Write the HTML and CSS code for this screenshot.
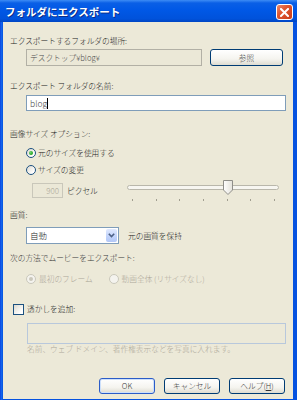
FILE: index.html
```html
<!DOCTYPE html>
<html lang="ja">

<head>
    <meta charset="utf-8" />
    <title>フォルダにエクスポート</title>
    <link rel="stylesheet" href="styles.css">
</head>

<body>
    <div class="window">
        <div class="titlebar">
            <span class="title">フォルダにエクスポート</span>
            <span class="close">
                <svg width="9" height="9" viewBox="0 0 9 9">
                    <path d="M1 1 L8 8 M8 1 L1 8" stroke="#fff" stroke-width="2" stroke-linecap="square" />
                </svg>
            </span>
        </div>
        <div class="frame">
            <div class="panel">
                <div class="label l-loc">エクスポートするフォルダの場所:</div>
                <div class="row loc-row">
                    <div class="field readonly">デスクトップ¥blog¥</div>
                    <div class="btn browse">参照</div>
                </div>

                <div class="label l-name">エクスポート フォルダの名前:</div>
                <div class="field name">blog<span class="caret"></span></div>

                <div class="label l-size">画像サイズ オプション:</div>
                <div class="option opt-orig">
                    <span class="radio checked"></span>
                    <span>元のサイズを使用する</span>
                </div>
                <div class="option opt-resize">
                    <span class="radio"></span>
                    <span>サイズの変更</span>
                </div>
                <div class="row size-row">
                    <div class="field px disabled">900</div>
                    <span class="px-label">ピクセル</span>
                    <div class="slider">
                        <div class="track"></div>
                        <svg class="thumb" width="10" height="15" viewBox="0 0 10 15">
                            <defs>
                                <linearGradient id="tg" x1="0" y1="0" x2="1" y2="0">
                                    <stop offset="0" stop-color="#ffffff" />
                                    <stop offset="1" stop-color="#e4e2da" />
                                </linearGradient>
                            </defs>
                            <path d="M0.5 0.5 H9.5 V10 L5 14.5 L0.5 10 Z" fill="url(#tg)" stroke="#8f8e89" />
                        </svg>
                        <div class="ticks">
                            <i></i><i></i><i></i><i></i><i></i><i></i><i></i>
                        </div>
                    </div>
                </div>

                <div class="label l-quality">画質:</div>
                <div class="row quality-row">
                    <div class="select">
                        <span class="select-text">自動</span>
                        <span class="select-btn">
                            <svg width="7" height="5" viewBox="0 0 7 5">
                                <path d="M0.8 0.8 L3.5 3.6 L6.2 0.8" fill="none" stroke="#4d6185" stroke-width="1.6" />
                            </svg>
                        </span>
                    </div>
                    <span class="quality-note">元の画質を保持</span>
                </div>

                <div class="label l-movie">次の方法でムービーをエクスポート:</div>
                <div class="row movie-row">
                    <div class="option inline">
                        <span class="radio checked off"></span>
                        <span class="muted">最初のフレーム</span>
                    </div>
                    <div class="option inline second">
                        <span class="radio off"></span>
                        <span class="muted">動画全体 (リサイズなし)</span>
                    </div>
                </div>

                <div class="option check-row">
                    <span class="checkbox"></span>
                    <span>透かしを追加:</span>
                </div>
                <div class="field watermark"></div>
                <div class="hint">名前、ウェブ ドメイン、著作権表示などを写真に入れます。</div>

                <div class="buttons">
                    <div class="btn ok">OK</div>
                    <div class="btn">キャンセル</div>
                    <div class="btn">ヘルプ(<u>H</u>)</div>
                </div>
            </div>
        </div>
    </div>
</body>

</html>
```

FILE: styles.css
```css
body {
    margin: 0;
    background-color: #0a4cdb;
    font-family: "Noto Sans CJK JP", "Liberation Sans", sans-serif;
}

.window {
    width: 297px;
    height: 400px;
    display: flex;
    flex-direction: column;
    background-color: #0552e0;
}

.titlebar {
    height: 22px;
    flex: none;
    display: flex;
    align-items: center;
    justify-content: space-between;
    padding: 0 4px 0 5px;
    background: linear-gradient(#3d8cf5 0, #0a5fe6 3px, #0058e6 45%, #0052db 85%, #0046c4 100%);
}

.title {
    color: #fff;
    font-size: 10.5px;
    font-weight: bold;
    line-height: 12px;
    margin-top: 2px;
    text-shadow: 1px 1px 0 #0a2d8a;
}

.close {
    width: 15px;
    height: 14px;
    margin-top: 2px;
    display: flex;
    align-items: center;
    justify-content: center;
    border: 1px solid #fff;
    border-radius: 3px;
    background: linear-gradient(135deg, #e98a6e 0, #e0562f 40%, #c83d1c 100%);
}

.frame {
    flex: 1;
    padding: 0 4px 3px 3px;
    display: flex;
    background: linear-gradient(90deg, #0831d9 0, #166aee 1px, #0552e0 3px);
}

.panel {
    flex: 1;
    background-color: #ece9d8;
    padding: 0 7px 5px 7px;
    font-size: 7.7px;
    font-weight: 300;
    color: #222;
    display: flex;
    flex-direction: column;
}

.label {
    line-height: 12px;
    height: 12px;
}

.l-loc { margin-top: 13px; }
.l-name { margin-top: 14px; }
.l-size { margin-top: 17px; }
.l-quality { margin-top: 11px; }
.l-movie { margin-top: 8px; color: #3a3a3a; }

.row {
    display: flex;
    align-items: center;
}

.loc-row {
    margin-top: 2px;
    height: 17px;
    padding-left: 16px;
}

.field {
    box-sizing: border-box;
    border: 1px solid #7f9db9;
    background-color: #fff;
    line-height: 13px;
    padding: 0 3px;
    white-space: nowrap;
}

.readonly {
    width: 176px;
    height: 17px;
    line-height: 15px;
    background-color: #ebe8d7;
    border-color: #b2b0a5;
    color: #4c4c4c;
}

.btn {
    box-sizing: border-box;
    width: 56px;
    height: 16px;
    border: 1px solid #003c74;
    border-radius: 3px;
    background: linear-gradient(#ffffff 0, #f5f4ef 60%, #dedcd1 100%);
    display: flex;
    align-items: center;
    justify-content: center;
    line-height: 12px;
    color: #333;
}

.btn u {
    text-decoration: underline;
}

.browse {
    width: 73px;
    height: 17px;
    margin-left: 8px;
}

.name {
    margin: 3px 0 0 16px;
    height: 16px;
    line-height: 14px;
    font-size: 8.5px;
    color: #444;
}

.caret {
    display: inline-block;
    width: 1px;
    height: 11px;
    background-color: #000;
    vertical-align: -2px;
}

.option {
    display: flex;
    align-items: center;
    height: 12px;
    line-height: 12px;
}

.opt-orig { margin: 7px 0 0 16px; }
.opt-resize { margin: 5px 0 0 16px; }

.radio {
    box-sizing: border-box;
    width: 10px;
    height: 10px;
    border-radius: 50%;
    border: 1px solid #1c5180;
    background: linear-gradient(135deg, #dcd9cf 0, #fff 80%);
    margin-right: 2px;
    display: flex;
    align-items: center;
    justify-content: center;
}

.radio.checked::after {
    content: "";
    width: 4px;
    height: 4px;
    border-radius: 50%;
    background: radial-gradient(circle at 35% 35%, #6ed56e 0, #21a121 70%);
}

.radio.off {
    border-color: #cac8bb;
    background: #f4f3ee;
}

.radio.checked.off::after {
    background: #cac8bb;
}

.size-row {
    margin: 7px 0 0 22px;
    height: 15px;
    align-items: flex-start;
}

.px {
    width: 31px;
    height: 15px;
    text-align: right;
    background-color: #ebe8d7;
    border-color: #c9c7ba;
    color: #aca899;
    font-size: 8px;
}

.px-label {
    width: 36px;
    margin-left: 4px;
    line-height: 15px;
}

.slider {
    position: relative;
    width: 152px;
    height: 22px;
    margin: -3px 0 0 24px;
}

.track {
    box-sizing: border-box;
    margin-top: 5px;
    height: 5px;
    border: 1px solid #b9b7ab;
    border-radius: 3px;
    background-color: #f7f6f1;
}

.thumb {
    position: absolute;
    left: 96px;
    top: 0;
}

.ticks {
    display: flex;
    justify-content: space-between;
    padding: 0 4px 0 5px;
    margin-top: 9px;
}

.ticks i {
    width: 1px;
    height: 2px;
    background-color: #a19e90;
}

.quality-row {
    margin: 6px 0 0 16px;
    height: 17px;
}

.select {
    box-sizing: border-box;
    width: 93px;
    height: 17px;
    border: 1px solid #7f9db9;
    background-color: #fff;
    display: flex;
    align-items: stretch;
}

.select-text {
    flex: 1;
    padding-left: 3px;
    line-height: 15px;
    font-size: 8.5px;
}

.select-btn {
    width: 11px;
    margin: 1px;
    border-radius: 2px;
    background: linear-gradient(#e0e9fe 0, #c1d3fb 60%, #b2c7f6 100%);
    display: flex;
    align-items: center;
    justify-content: center;
}

.quality-note {
    margin-left: 9px;
}

.movie-row {
    margin: 9px 0 0 16px;
    height: 12px;
}

.muted {
    color: #aca899;
}

.option.inline .radio {
    margin-right: 3px;
}

.option.second {
    margin-left: 16px;
}

.check-row {
    margin: 18px 0 0 3px;
}

.checkbox {
    box-sizing: border-box;
    width: 11px;
    height: 11px;
    border: 1px solid #1c5180;
    background: linear-gradient(135deg, #dcd9cf 0, #fff 80%);
    margin-right: 3px;
}

.watermark {
    margin: 8px 0 0 17px;
    height: 21px;
    background-color: #ece9d8;
    border-color: #b8c8dc;
}

.hint {
    margin-left: 17px;
    line-height: 10px;
    color: #aca899;
}

.buttons {
    display: flex;
    justify-content: flex-end;
    gap: 9px;
    margin-top: 24px;
    padding-right: 1px;
}

.ok {
    border-color: #2b5cc7;
    box-shadow: inset 0 0 0 1px #cde0fb;
}
```
